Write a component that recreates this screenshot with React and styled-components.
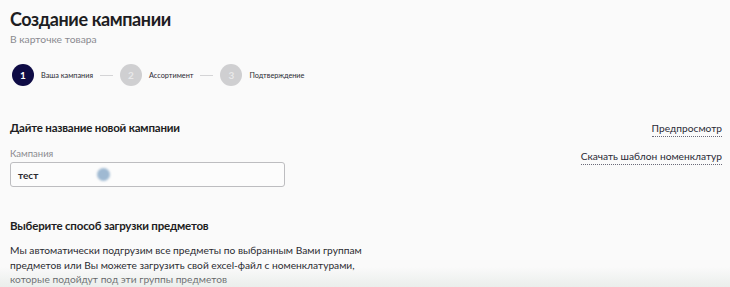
import React from 'react';
import styled, { createGlobalStyle } from 'styled-components';

const GlobalStyle = createGlobalStyle`
  html, body {
    margin: 0;
    padding: 0;
    background: #fafafa;
    font-family: Lato, "Noto Sans", sans-serif;
    color: #1d1d22;
    overflow: hidden;
  }
`;

const Page = styled.div`
  position: relative;
  width: 730px;
  height: 287px;
  padding: 7px 8px 0 10px;
  box-sizing: border-box;
  overflow: hidden;
`;

const Title = styled.h1`
  margin: 0;
  font-size: 18px;
  font-weight: 700;
  line-height: 24px;
  letter-spacing: -0.4px;
`;

const Subtitle = styled.p`
  margin: 1px 0 0;
  font-size: 10.3px;
  line-height: 14px;
  color: #8a8a90;
`;

const Stepper = styled.div`
  display: flex;
  align-items: center;
  margin: 18px 0 0 2px;
`;

const Step = styled.div`
  display: flex;
  align-items: center;
  gap: 7px;
`;

const StepCircle = styled.div`
  width: 22px;
  height: 22px;
  border-radius: 50%;
  background: ${({ active }) => (active ? '#0e0b45' : '#cfcfd1')};
  color: ${({ active }) => (active ? '#fff' : '#e9e9ea')};
  font-size: 10px;
  font-weight: 700;
  display: flex;
  align-items: center;
  justify-content: center;
`;

const StepLabel = styled.span`
  font-size: 7.3px;
  color: #2b2b33;
`;

const StepLine = styled.div`
  width: 13px;
  height: 1px;
  background: #d4d4d6;
  margin: 0 7px;
`;

const Body = styled.div`
  display: flex;
  justify-content: space-between;
  margin-top: 34px;
`;

const LeftColumn = styled.div`
  width: 370px;
`;

const SectionTitle = styled.h2`
  margin: 0;
  font-size: 11.5px;
  font-weight: 700;
  line-height: 16px;
  letter-spacing: -0.2px;
`;

const FieldLabel = styled.div`
  margin-top: 12px;
  font-size: 9.5px;
  color: #8a8a90;
  line-height: 12px;
`;

const InputBox = styled.div`
  position: relative;
  margin-top: 2px;
  width: 275px;
  height: 25px;
  box-sizing: border-box;
  border: 1px solid #bdbdc0;
  border-radius: 3px;
  background: #fcfcfc;
  display: flex;
  align-items: center;
  padding-left: 7px;
  font-size: 10px;
  font-weight: 700;
  color: #2a2a30;
`;

const CursorDot = styled.span`
  position: absolute;
  left: 86px;
  top: 5px;
  width: 13px;
  height: 13px;
  border-radius: 50%;
  background: #9fb9d2;
  filter: blur(1px);
`;

const SecondSection = styled.div`
  margin-top: 31px;
`;

const Paragraph = styled.p`
  margin: 9px 0 0;
  font-size: 10.2px;
  line-height: 14.5px;
  color: #2a2a30;
  width: 372px;
`;

const RightColumn = styled.div`
  display: flex;
  flex-direction: column;
  align-items: flex-end;
  gap: 12px;
  padding-top: 1px;
`;

const DottedLink = styled.a`
  font-size: 10.2px;
  line-height: 14px;
  color: #2a2a36;
  text-decoration: none;
  border-bottom: 1px dotted #6a6a78;
  padding-bottom: 1px;
`;

const BottomFade = styled.div`
  position: absolute;
  left: 0;
  right: 0;
  bottom: 0;
  height: 20px;
  background: linear-gradient(to bottom, rgba(238, 242, 240, 0), rgba(222, 228, 224, 0.55));
  pointer-events: none;
`;

const steps = ['Ваша кампания', 'Ассортимент', 'Подтверждение'];

const App = () => {
  return (
    <Page>
      <GlobalStyle />
      <Title>Создание кампании</Title>
      <Subtitle>В карточке товара</Subtitle>

      <Stepper>
        {steps.map((label, i) => (
          <React.Fragment key={label}>
            {i > 0 && <StepLine />}
            <Step>
              <StepCircle active={i === 0}>{i + 1}</StepCircle>
              <StepLabel>{label}</StepLabel>
            </Step>
          </React.Fragment>
        ))}
      </Stepper>

      <Body>
        <LeftColumn>
          <SectionTitle>Дайте название новой кампании</SectionTitle>
          <FieldLabel>Кампания</FieldLabel>
          <InputBox>
            тест
            <CursorDot />
          </InputBox>

          <SecondSection>
            <SectionTitle>Выберите способ загрузки предметов</SectionTitle>
            <Paragraph>
              Мы автоматически подгрузим все предметы по выбранным Вами группам
              предметов или Вы можете загрузить свой excel-файл с номенклатурами,
              которые подойдут под эти группы предметов
            </Paragraph>
          </SecondSection>
        </LeftColumn>

        <RightColumn>
          <DottedLink href="#">Предпросмотр</DottedLink>
          <DottedLink href="#">Скачать шаблон номенклатур</DottedLink>
        </RightColumn>
      </Body>

      <BottomFade />
    </Page>
  );
};

export default App;
